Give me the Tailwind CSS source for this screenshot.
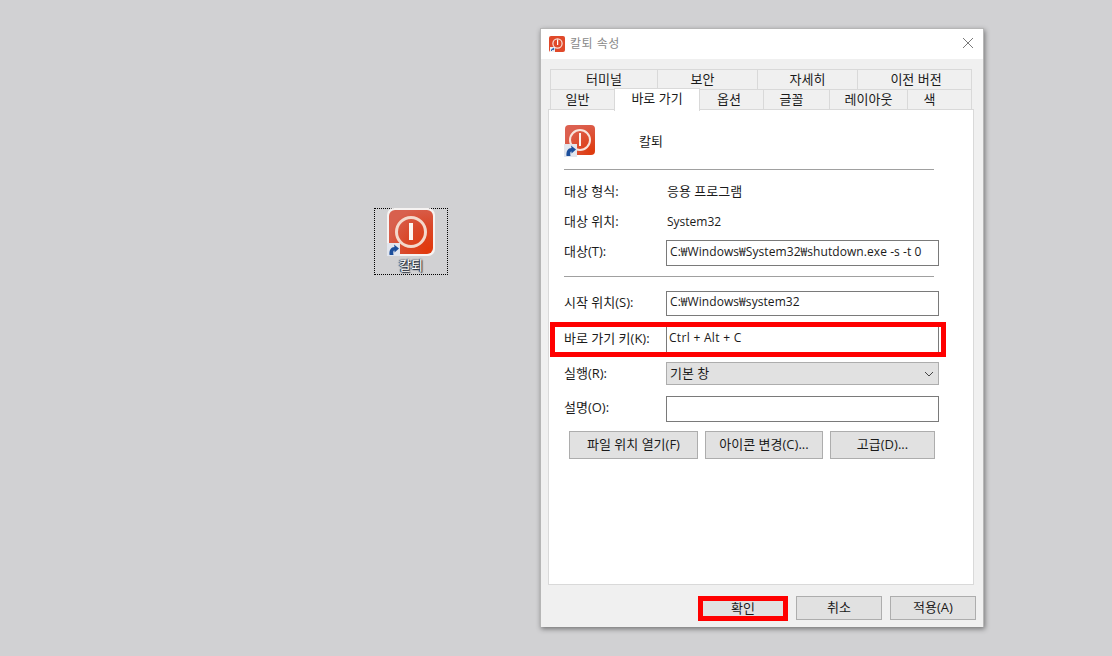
<!doctype html>
<html lang="ko"><head><meta charset="utf-8">
<script src="https://cdn.jsdelivr.net/npm/@tailwindcss/browser@4"></script>
</head>
<body class="m-0 w-[1112px] h-[656px] overflow-hidden bg-[#d1d1d3] relative font-['Open_Sans','Noto_Sans_CJK_KR',sans-serif] text-[13px] text-[#1a1a1a]">

<!-- desktop icon -->
<div class="absolute left-[374px] top-[208px] w-[74px] h-[67px] border border-dotted border-black flex flex-col items-center">
  <div class="relative w-[48px] h-[48px] -mt-px">
    <svg width="48" height="48" viewBox="0 0 48 48" class="absolute left-0 top-0">
      <defs><radialGradient id="g1" cx="90%" cy="90%" r="100%"><stop offset="0" stop-color="#e2380a"/><stop offset=".55" stop-color="#d9482a"/><stop offset="1" stop-color="#d8604e"/></radialGradient></defs>
      <rect x="0" y="0" width="48" height="48" rx="7" fill="#f6f3f2"/>
      <rect x="2" y="2" width="44" height="44" rx="6" fill="url(#g1)"/>
      <circle cx="24" cy="24" r="14.5" fill="none" stroke="#f4d8cc" stroke-width="3"/>
      <rect x="22" y="15" width="4" height="17" fill="#fdf6f2"/>
    </svg>
    <svg width="13" height="13" viewBox="0 0 13 13" class="absolute left-0 top-[35px]">
      <rect width="13" height="13" fill="#e2e6ee"/>
      <path d="M2.5 12 C2 7 4 4 7.5 4 L7 1.5 L12 5.5 L7.5 9.5 L7.5 7.5 C6.2 7.5 6 9.5 6.5 12 Z" fill="#1c4f9c"/>
    </svg>
  </div>
  <div class="mt-px text-[13px] leading-[17px] text-white [text-shadow:0_0_2px_#1c2430,1px_1px_1px_#1c2430,-1px_0_1px_#1c2430]">칼퇴</div>
</div>

<!-- window -->
<div class="absolute left-[540px] top-[28px] w-[444px] h-[599px] bg-[#f0f0f0] border-t border-l border-r border-[#8f8f8f]/60 shadow-[1px_2px_5px_rgba(0,0,0,0.45)] flex flex-col">
  <div class="h-[30px] shrink-0 bg-white flex items-center pl-[8px] pb-px relative">
    <svg width="16" height="16" viewBox="0 0 16 16">
      <rect width="16" height="16" rx="2" fill="#e0492a"/>
      <circle cx="8.5" cy="7.5" r="4.6" fill="none" stroke="#f6e3dc" stroke-width="1.2"/>
      <rect x="8" y="3.5" width="1.2" height="5.5" fill="#fff"/>
      <path d="M1 16 L1 11 L6 11 L6 16 Z" fill="#eef0f3"/>
      <path d="M2 15 C2 13 3 12.5 4 12.5 L4 11.5 L5.6 13 L4 14.5 L3.8 13.8 C3 14 3 14.5 3 15 Z" fill="#1f5fae"/>
    </svg>
    <span class="ml-[5px] text-[#8a8a8a] text-[12px] tracking-[0.5px]">칼퇴 속성</span>
    <svg width="12" height="12" viewBox="0 0 12 12" class="absolute right-[9px] top-[8px]"><path d="M1 1 L11 11 M11 1 L1 11" stroke="#7a7a7a" stroke-width="1" fill="none"/></svg>
  </div>

  <div class="flex-1 flex flex-col pt-[10px] pl-[7px] pr-[10px]">
    <div class="ml-[2px] w-[422px] h-[20px] flex border border-b-0 border-[#d9d9d9] text-center leading-[19px]">
      <div class="w-[107px] border-r border-[#d9d9d9]">터미널</div>
      <div class="w-[100px] pr-[10px] border-r border-[#d9d9d9]">보안</div>
      <div class="w-[100px] border-r border-[#d9d9d9]">자세히</div>
      <div class="flex-1 pl-[3px]">이전 버전</div>
    </div>
    <div class="ml-[2px] w-[422px] h-[20px] flex border border-b-0 border-[#d9d9d9] text-center leading-[19px] relative">
      <div class="w-[63px] pr-[10px]">일반</div>
      <div class="w-[86px] h-[23px] -mt-[2px] bg-white border-x border-t border-[#d9d9d9] relative z-10">바로 가기</div>
      <div class="w-[64px] pr-[5px] border-r border-[#d9d9d9]">옵션</div>
      <div class="w-[66px] pr-[10px] border-r border-[#d9d9d9]">글꼴</div>
      <div class="w-[78px] border-r border-[#d9d9d9]">레이아웃</div>
      <div class="flex-1 pr-[20px]">색</div>
    </div>

    <div class="w-[426px] h-[476px] bg-white border border-[#d9d9d9] pl-[15px] pt-[15px] flex flex-col relative">
      <div class="flex items-center h-[30px]">
        <div class="relative w-[31px] h-[31px] ml-px">
          <svg width="31" height="31" viewBox="0 0 31 31">
            <defs><radialGradient id="g2" cx="90%" cy="90%" r="100%"><stop offset="0" stop-color="#de3a0c"/><stop offset="1" stop-color="#dc6050"/></radialGradient></defs>
            <rect width="30" height="30" rx="4" fill="url(#g2)"/>
            <circle cx="15" cy="15" r="10" fill="none" stroke="#f8e4dc" stroke-width="2"/>
            <rect x="14" y="8" width="2" height="13" fill="#fdf3ef"/>
          </svg>
          <svg width="13" height="13" viewBox="0 0 13 13" class="absolute -left-px top-[19px]">
            <rect width="13" height="13" fill="#e2e6ee"/>
            <path d="M2.5 12 C2 7 4 4 7.5 4 L7 1.5 L12 5.5 L7.5 9.5 L7.5 7.5 C6.2 7.5 6 9.5 6.5 12 Z" fill="#1c4f9c"/>
          </svg>
        </div>
        <span class="ml-[43px] mt-[4px]">칼퇴</span>
      </div>
      <div class="mt-[14px] w-[370px] h-px bg-[#a0a0a0]"></div>

      <div class="mt-[13px] flex items-center h-[18px]"><span class="w-[103px]">대상 형식:</span><span>응용 프로그램</span></div>
      <div class="mt-[12px] flex items-center h-[18px]"><span class="w-[103px]">대상 위치:</span><span class="text-[12px]">System32</span></div>
      <div class="mt-[9px] flex items-center h-[26px]"><span class="w-[102px] mb-[2px]">대상(T):</span><div class="w-[273px] h-[26px] border border-[#7a7a7a] pl-[3px] text-[12px] leading-[21px] tracking-[0.07px]">C:₩Windows₩System32₩shutdown.exe -s -t 0</div></div>
      <div class="mt-[10px] w-[370px] h-px bg-[#a0a0a0]"></div>

      <div class="mt-[14px] flex items-center h-[25px]"><span class="w-[102px] mb-[2px]">시작 위치(S):</span><div class="w-[273px] h-[25px] border border-[#7a7a7a] pl-[3px] text-[12px] leading-[20px] tracking-[0.07px]">C:₩Windows₩system32</div></div>
      <div class="mt-[11px] flex items-center h-[26px]"><span class="w-[102px] mb-[2px]">바로 가기 키(K):</span><div class="w-[273px] h-[26px] border-l border-r border-[#7a7a7a] pl-[2px] text-[12px] leading-[22px] tracking-[0.3px]">Ctrl + Alt + C</div></div>
      <div class="mt-[9px] flex items-center h-[23px]"><span class="w-[102px]">실행(R):</span>
        <div class="w-[273px] h-[23px] border border-[#adadad] bg-[#e1e1e1] pl-[3px] pr-[4px] flex items-center justify-between"><span>기본 창</span>
          <svg width="10" height="6" viewBox="0 0 10 6"><path d="M1 1 L5 5 L9 1" stroke="#444" stroke-width="1" fill="none"/></svg></div>
      </div>
      <div class="mt-[11px] flex items-center h-[26px]"><span class="w-[102px] mb-[2px]">설명(O):</span><div class="w-[273px] h-[26px] border border-[#7a7a7a]"></div></div>
      <div class="mt-[9px] ml-[5px] flex h-[28px]">
        <div class="w-[129px] border border-[#adadad] bg-[#e1e1e1] flex items-center justify-center">파일 위치 열기(F)</div>
        <div class="ml-[7px] w-[118px] border border-[#adadad] bg-[#e1e1e1] flex items-center justify-center">아이콘 변경(C)...</div>
        <div class="ml-[7px] w-[105px] border border-[#adadad] bg-[#e1e1e1] flex items-center justify-center">고급(D)...</div>
      </div>
    </div>

    <div class="flex justify-end mt-[11px] -mr-[3px] gap-[8px] h-[24px]">
      <div class="w-[90px] h-[25px] border-[5px] border-[#ff0000] bg-[#e1e1e1] flex items-center justify-center">확인</div>
      <div class="w-[86px] border border-[#adadad] bg-[#e1e1e1] flex items-center justify-center">취소</div>
      <div class="w-[86px] border border-[#adadad] bg-[#e1e1e1] flex items-center justify-center">적용(A)</div>
    </div>
  </div>
</div>

<!-- red highlight over shortcut row -->
<div class="absolute left-[550px] top-[322px] w-[396px] h-[35px] border-[5px] border-[#ff0000]"></div>
</body></html>
